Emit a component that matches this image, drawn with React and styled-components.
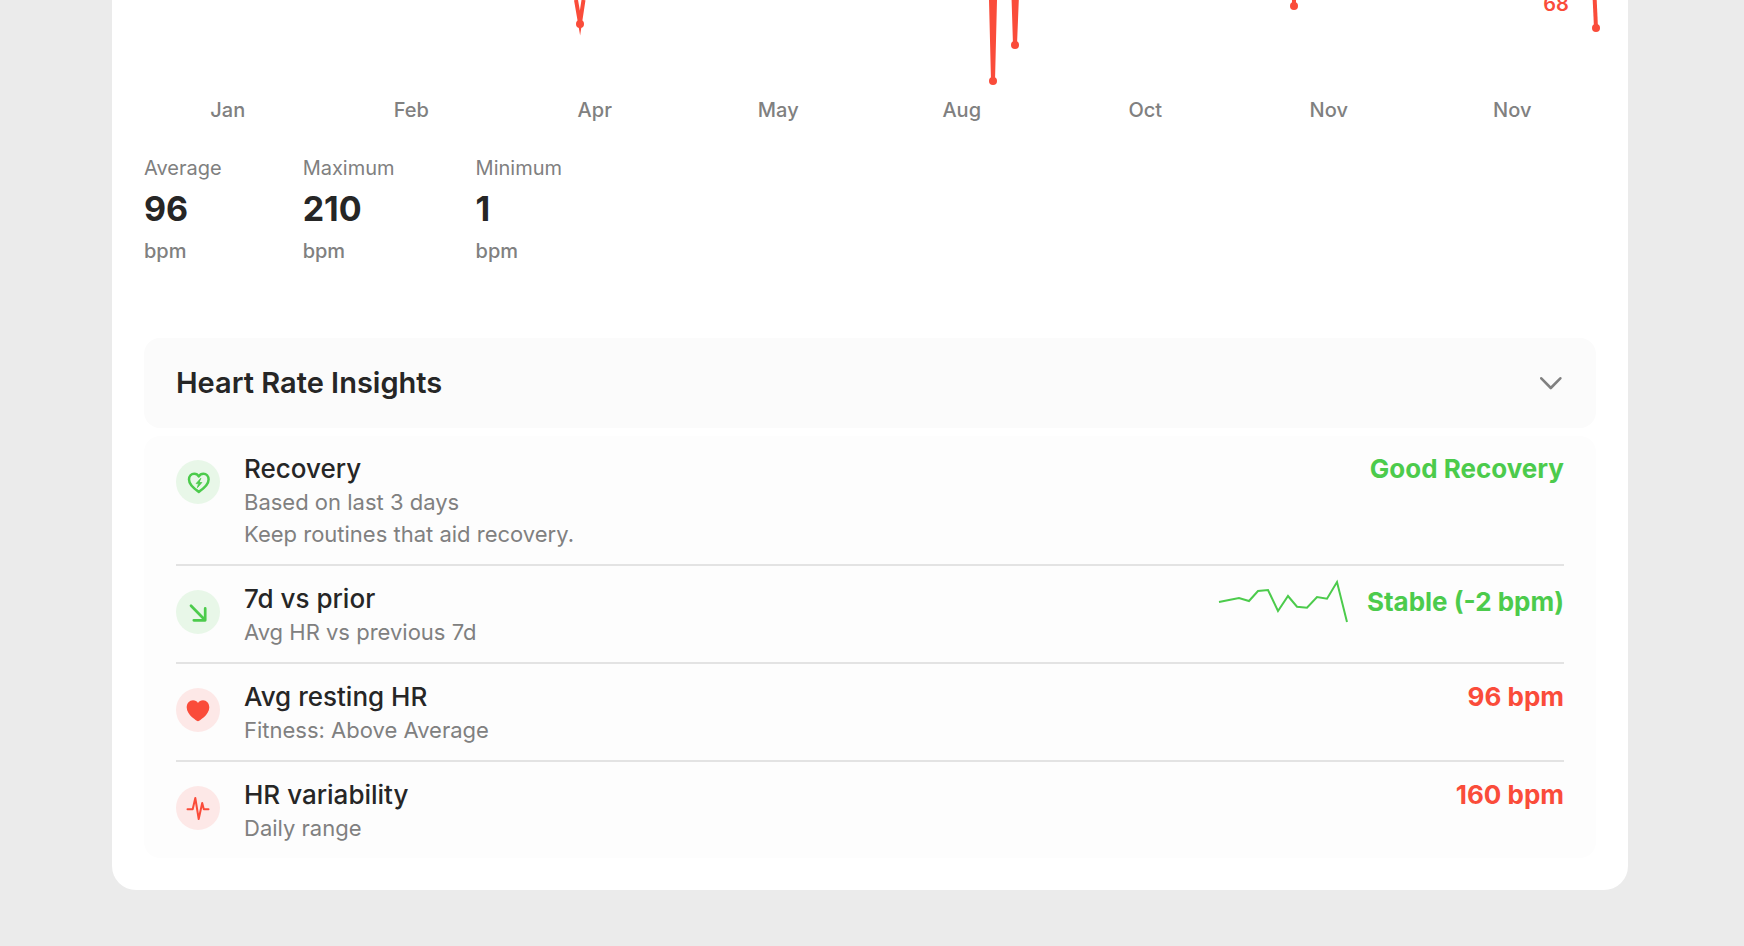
import { useState } from "react";
import styled, { createGlobalStyle } from "styled-components";

const months = ["Jan", "Feb", "Apr", "May", "Aug", "Oct", "Nov", "Nov"];

const stats = [
  { label: "Average", value: "96", unit: "bpm" },
  { label: "Maximum", value: "210", unit: "bpm" },
  { label: "Minimum", value: "1", unit: "bpm" },
];

const lows = [
  [436, 24],
  [849, 81],
  [871, 45],
  [1150, 6],
  [1452, 28],
];

const trend = [
  [0, 20], [10, 18], [20, 16], [30, 19], [39, 9], [49, 8], [59, 29],
  [69, 14], [78, 24.7], [88, 25.7], [98, 15], [108, 16.7], [118, 0], [128, 40],
];

const insights = [
  {
    icon: "recovery",
    tone: "good",
    title: "Recovery",
    notes: ["Based on last 3 days", "Keep routines that aid recovery."],
    result: "Good Recovery",
  },
  {
    icon: "down",
    tone: "good",
    title: "7d vs prior",
    notes: ["Avg HR vs previous 7d"],
    result: "Stable (-2 bpm)",
    trend,
  },
  {
    icon: "heart",
    tone: "alert",
    title: "Avg resting HR",
    notes: ["Fitness: Above Average"],
    result: "96 bpm",
  },
  {
    icon: "pulse",
    tone: "alert",
    title: "HR variability",
    notes: ["Daily range"],
    result: "160 bpm",
  },
];

const tones = {
  good: { color: "#4ccb4c", soft: "#e8f7e8" },
  alert: { color: "#fa4c3a", soft: "#fde8e7" },
};

const icons = {
  recovery: (
    <>
      <path
        d="M.8 9.9C-3.6 7-9 3.1-9-2.4C-9-6-6.7-8.3-3.8-8.3C-1.8-8.3-.1-7.3.8-5.6C1.7-7.3 3.4-8.3 5.4-8.3C8.3-8.3 10.6-6 10.6-2.4C10.6 3.1 5.2 7 .8 9.9Z"
        strokeWidth="2.5"
      />
      <path
        d="M2.6-3.5L-1.9 1.6H.5L-.6 5.7L3.9.5H1.5Z"
        fill="currentColor"
        strokeWidth=".8"
      />
    </>
  ),
  down: <path d="M-7-6.3L7.2 8.2M7.2-3.6V8.3H-4.2" strokeWidth="2.7" />,
  heart: (
    <path
      d="M0 11.3C-.7 11.3-11.3 5.2-11.3-2.4C-11.3-6.7-8.5-9.7-5-9.7C-2.8-9.7-1-8.7 0-7C1-8.7 2.8-9.7 5-9.7C8.5-9.7 11.3-6.7 11.3-2.4C11.3 5.2.7 11.3 0 11.3Z"
      fill="currentColor"
      stroke="none"
    />
  ),
  pulse: (
    <path d="M-10.5 1.2H-5.3L-2.7-10L.7 11L4.2-5L5.8 1.2H10.5" strokeWidth="2" />
  ),
};

const App = () => {
  const [open, setOpen] = useState(true);

  return (
    <>
      <GlobalStyle />
      <Page>
        <Card>
          <Chart viewBox="0 0 1452 94" role="img" aria-label="Heart rate chart">
            <polyline points="432,0 436,23 439.5,0" />
            <polyline points="847,0 849,81 851,0" />
            <polyline points="869.6,0 871,45 872.8,0" />
            <polyline points="1150,0 1150,6" />
            <polyline points="1450.7,0 1452,28" />
            {lows.map(([x, y]) => (
              <circle key={x} cx={x} cy={y} r="4" />
            ))}
            <text x="1412" y="11">68</text>
          </Chart>
          <Months>
            {months.map((month, i) => (
              <span key={i}>{month}</span>
            ))}
          </Months>

          <Stats>
            {stats.map((stat) => (
              <Stat key={stat.label}>
                <StatLabel>{stat.label}</StatLabel>
                <StatValue>{stat.value}</StatValue>
                <StatUnit>{stat.unit}</StatUnit>
              </Stat>
            ))}
          </Stats>

          <InsightsToggle
            type="button"
            aria-expanded={open}
            onClick={() => setOpen(!open)}
          >
            Heart Rate Insights
            <Chevron viewBox="0 0 24 24" $open={open} aria-hidden="true">
              <path d="M1.3 7.3L10.8 17L20.3 7.3" />
            </Chevron>
          </InsightsToggle>

          {open && (
            <Insights>
              {insights.map((item) => (
                <Insight key={item.title}>
                  <Badge $tone={item.tone}>
                    <Icon viewBox="-12 -12 24 24" aria-hidden="true">
                      {icons[item.icon]}
                    </Icon>
                  </Badge>
                  <Details>
                    <Title>{item.title}</Title>
                    {item.notes.map((note) => (
                      <Note key={note}>{note}</Note>
                    ))}
                  </Details>
                  <Result $tone={item.tone} $tall={Boolean(item.trend)}>
                    {item.trend && (
                      <Sparkline viewBox="0 0 128 40" aria-hidden="true">
                        <polyline points={item.trend.join(" ")} />
                      </Sparkline>
                    )}
                    {item.result}
                  </Result>
                </Insight>
              ))}
            </Insights>
          )}
        </Card>
      </Page>
    </>
  );
};

export default App;

const GlobalStyle = createGlobalStyle`
  * {
    box-sizing: border-box;
  }
  body {
    margin: 0;
    background: #ebebeb;
    color: #262626;
    font-family: Inter, "Liberation Sans", sans-serif;
    -webkit-font-smoothing: antialiased;
  }
`;

const Page = styled.main`
  padding: 0 116px 56px 112px;
`;

const Card = styled.section`
  padding: 0 32px 32px;
  background: #fff;
  border-radius: 0 0 24px 24px;
`;

//Chart
const Chart = styled.svg`
  display: block;
  width: 100%;
  overflow: visible;
  polyline {
    fill: none;
    stroke: ${tones.alert.color};
    stroke-width: 4px;
    stroke-miterlimit: 10;
  }
  circle,
  text {
    fill: ${tones.alert.color};
  }
  text {
    font-size: 20px;
    font-weight: 600;
    text-anchor: middle;
  }
`;

const Months = styled.div`
  display: grid;
  grid-template-columns: repeat(8, 1fr);
  margin: 0 -8px;
  color: #808080;
  font-size: 20px;
  font-weight: 500;
  line-height: 32px;
  text-align: center;
`;

//Stats
const Stats = styled.dl`
  display: flex;
  gap: 81px;
  margin: 26px 0 70px;
`;

const Stat = styled.div`
  display: flex;
  flex-direction: column;
`;

const StatLabel = styled.dt`
  color: #808080;
  font-size: 20px;
  line-height: 32px;
`;

const StatValue = styled.dd`
  margin: 0;
  font-size: 34px;
  font-weight: 700;
  line-height: 50px;
`;

const StatUnit = styled.dd`
  margin: 0;
  color: #808080;
  font-size: 20px;
  font-weight: 500;
  line-height: 34px;
`;

//Insights
const InsightsToggle = styled.button`
  display: flex;
  align-items: center;
  justify-content: space-between;
  width: 100%;
  padding: 25px 32px;
  border: 0;
  border-radius: 16px;
  background: #fbfbfb;
  color: inherit;
  font: 600 29px/40px Inter, "Liberation Sans", sans-serif;
  text-align: left;
  cursor: pointer;
`;

const Chevron = styled.svg`
  width: 24px;
  height: 24px;
  fill: none;
  stroke: #808080;
  stroke-width: 2.6;
  stroke-linecap: round;
  stroke-linejoin: round;
  transform: ${(props) => (props.$open ? "none" : "rotate(-90deg)")};
`;

const Insights = styled.ul`
  margin: 8px 0 0;
  padding: 0 32px;
  border-radius: 16px;
  background: #fdfdfd;
  list-style: none;
`;

const Insight = styled.li`
  display: flex;
  align-items: flex-start;
  gap: 24px;
  padding: 16px 0 14px;
  & + & {
    border-top: 2px solid #e3e3e3;
  }
`;

const Badge = styled.span`
  display: flex;
  align-items: center;
  justify-content: center;
  flex: none;
  width: 44px;
  height: 44px;
  margin-top: 8px;
  border-radius: 50%;
  background: ${(props) => tones[props.$tone].soft};
  color: ${(props) => tones[props.$tone].color};
`;

const Icon = styled.svg`
  width: 24px;
  height: 24px;
  overflow: visible;
  fill: none;
  stroke: currentColor;
  stroke-linecap: round;
  stroke-linejoin: round;
`;

const Details = styled.div`
  flex: 1;
`;

const Title = styled.h3`
  margin: 0;
  font-size: 26px;
  font-weight: 500;
  line-height: 34px;
`;

const Note = styled.p`
  margin: 0;
  color: #808080;
  font-size: 22px;
  line-height: 32px;
`;

const Result = styled.strong`
  display: flex;
  align-items: center;
  gap: 20px;
  color: ${(props) => tones[props.$tone].color};
  font-size: 26px;
  font-weight: 700;
  line-height: ${(props) => (props.$tall ? "40px" : "34px")};
`;

const Sparkline = styled.svg`
  width: 128px;
  height: 40px;
  overflow: visible;
  fill: none;
  stroke: currentColor;
  stroke-width: 2;
`;
